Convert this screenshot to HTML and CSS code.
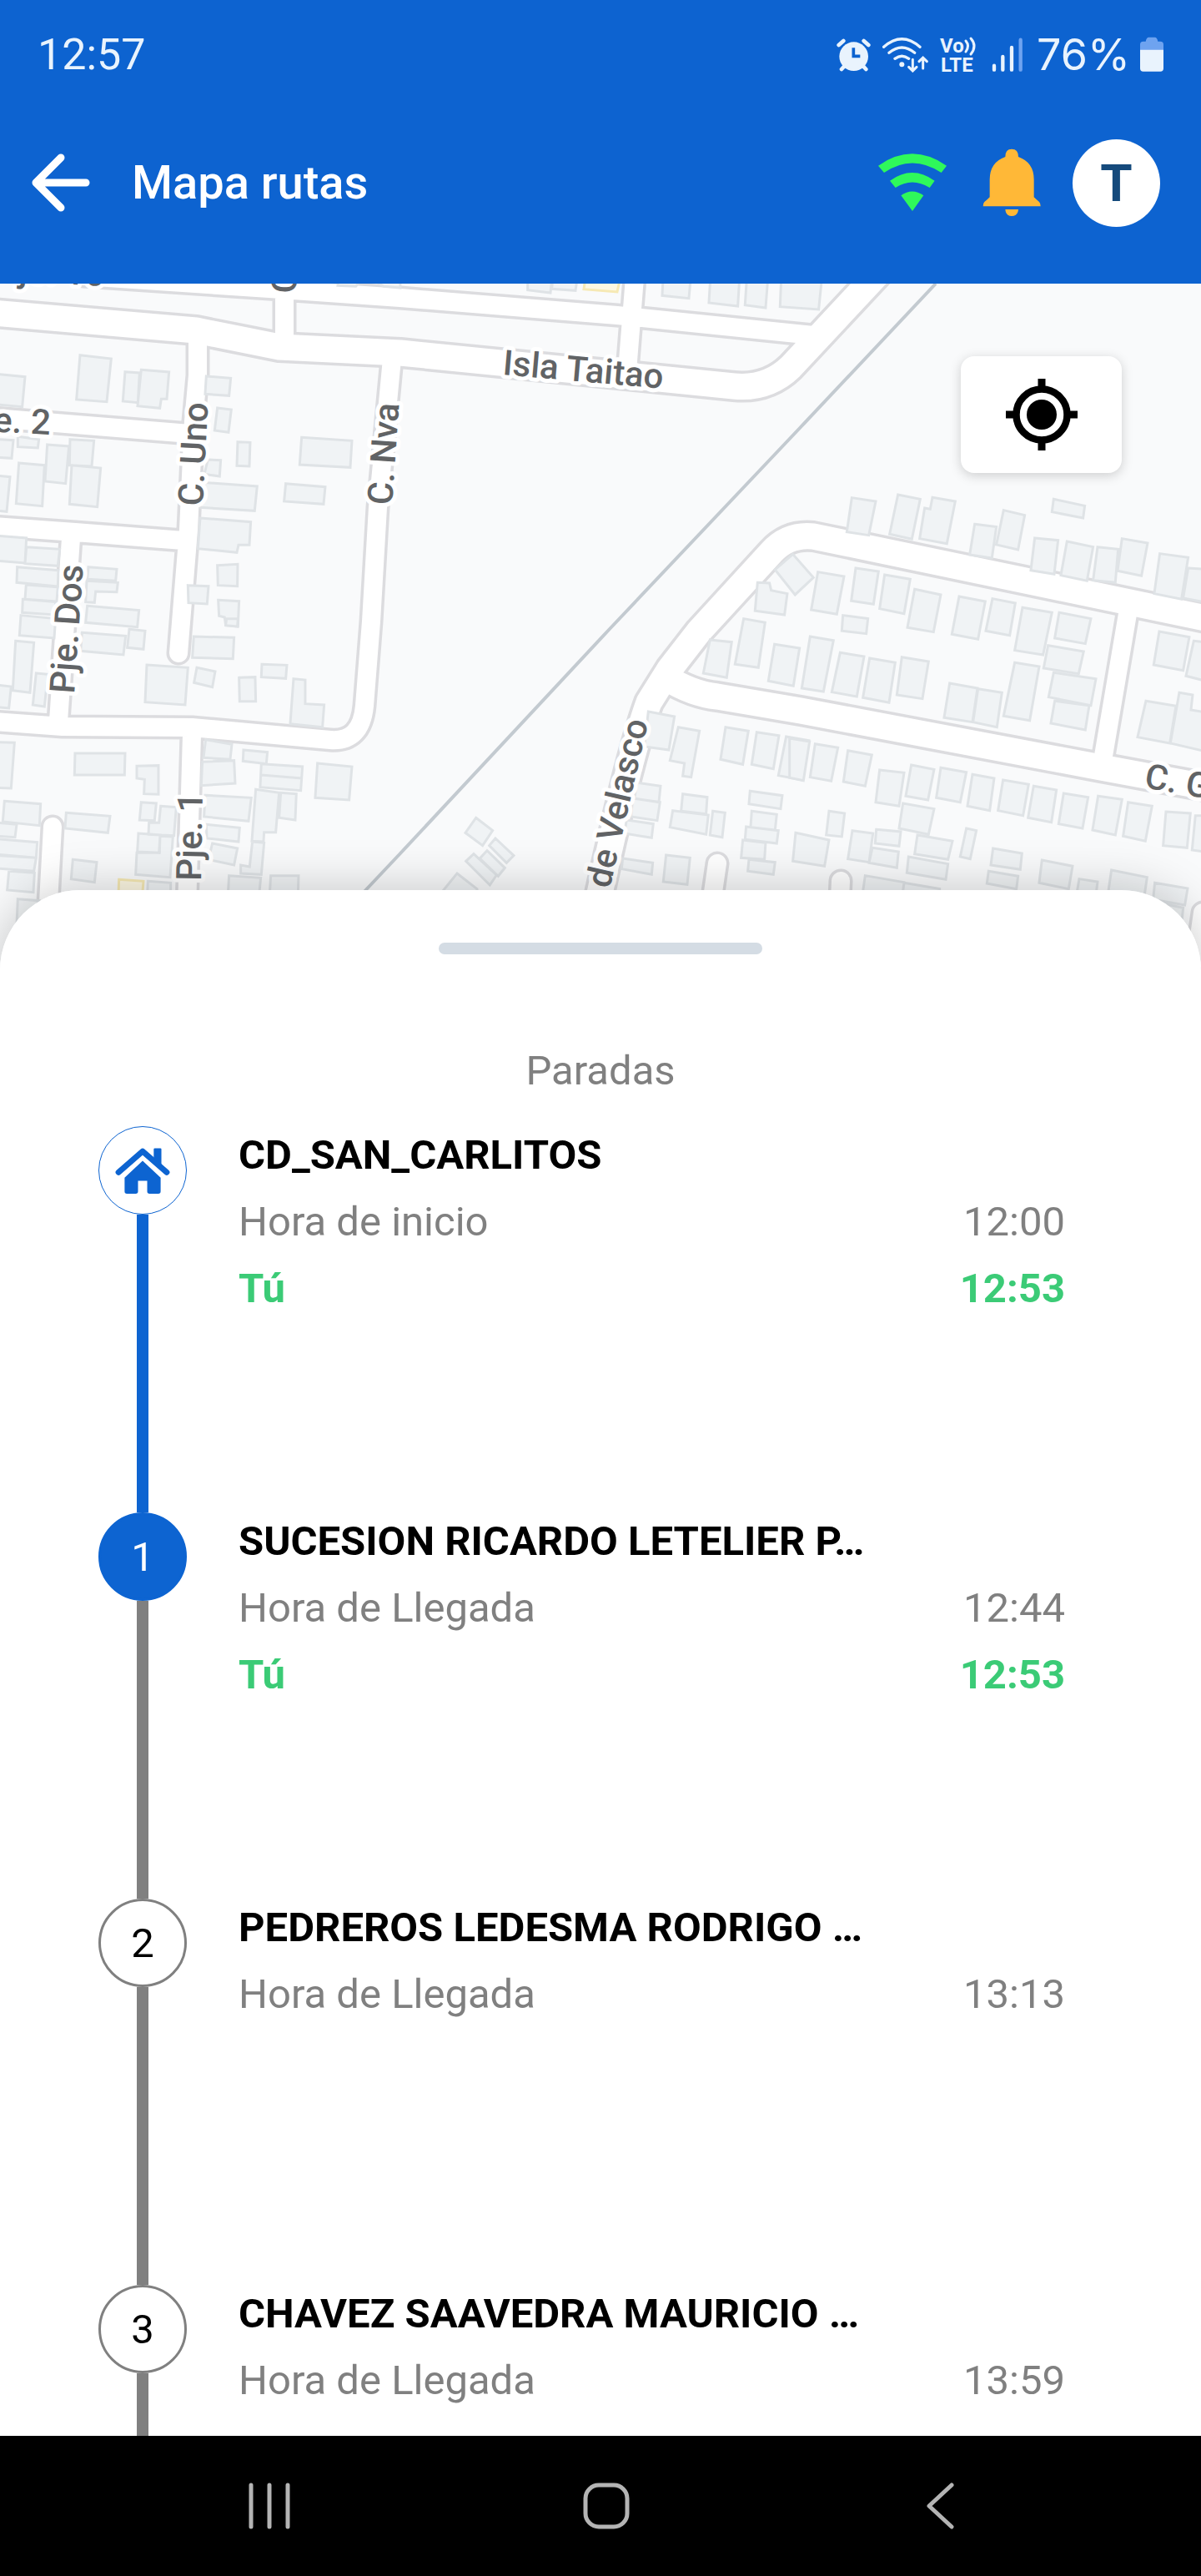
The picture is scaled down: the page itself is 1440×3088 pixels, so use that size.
FILE: index.html
```html
<!DOCTYPE html>
<html lang="es">
<head>
  <meta charset="UTF-8">
  <meta name="viewport" content="width=device-width, initial-scale=1.0">
  <title>Mapa rutas</title>
  <link rel="stylesheet" href="styles.css">
</head>
<body>
  <header class="top">
    <div class="status-bar">
      <span class="clock">12:57</span>
      <div class="status-icons">
        <!-- alarma -->
        <svg width="43" height="43" viewBox="132 128 129 129">
          <g fill="none" stroke="#e9f3fd" stroke-width="14" stroke-linecap="round">
            <path d="M143 158L160 143M250 158L233 143M153 245L165 232M241 245L229 232"/>
          </g>
          <circle cx="197" cy="199" r="52" fill="#e9f3fd"/>
          <path d="M196 168V198H220" fill="none" stroke="#0d63d0" stroke-width="11"/>
        </svg>
        <!-- wifi del sistema -->
        <svg width="58" height="43" viewBox="311 128 174 129">
          <g fill="none" stroke="#e9f3fd" stroke-width="10" stroke-linecap="round">
            <path d="M319 165Q384 108 449 165M338 186Q384 148 430 186M359 207Q384 188 409 207"/>
            <path d="M423 210V250M409 237L423 251L437 237M460 242V204M446 217L460 203L474 217" stroke-width="9"/>
          </g>
          <circle cx="384" cy="228" r="9" fill="#e9f3fd"/>
        </svg>
        <svg class="volte" width="44" height="43" viewBox="0 0 44 43">
          <text x="0" y="19">Vo</text>
          <text x="1" y="42">LTE</text>
          <path d="M31 5Q36 11 31 18M37 2Q45 11 37 21" fill="none" stroke="#e9f3fd" stroke-width="3" stroke-linecap="round"/>
        </svg>
        <svg width="48" height="43" viewBox="673 129 144 129">
          <g fill="none" stroke="#e9f3fd" stroke-width="13" stroke-linecap="round">
            <path d="M700 233V248M731 201V248M763 168V248"/>
            <path d="M795 140V248" stroke="#6ea3f0"/>
          </g>
        </svg>
        <span class="battery-text">76%</span>
        <svg width="28" height="43" viewBox="1221 130 84 129">
          <path d="M1221 178V158Q1221 147 1232 147H1241Q1244 132 1252 132H1274Q1282 132 1285 147H1294Q1305 147 1305 158V178Z" fill="#6ea3f0"/>
          <path d="M1221 177H1305V244Q1305 255 1294 255H1232Q1221 255 1221 244Z" fill="#e9f3fd"/>
        </svg>
      </div>
    </div>

    <div class="app-bar">
      <button type="button" class="icon-btn" aria-label="Volver">
        <svg width="70" height="70" viewBox="0 0 70 70">
          <path d="M35 5L5 35L35 65M6 35H65" fill="none" stroke="#fff" stroke-width="9" stroke-linecap="round" stroke-linejoin="round"/>
        </svg>
      </button>
      <h1>Mapa rutas</h1>
      <svg class="wifi" width="82" height="70" viewBox="278 556 246 210">
        <g fill="#2ff85b">
          <path d="M278 600Q400 514 524 600L505 625Q400 556 299 625Z"/>
          <path d="M320 654Q400 596 481 654L463 679Q400 640 340 679Z"/>
          <path d="M360 707Q400 678 441 707L401 763Z"/>
        </g>
      </svg>
      <button type="button" class="icon-btn bell" aria-label="Notificaciones">
        <svg width="70" height="82" viewBox="652 543 210 246">
          <path d="M734 573Q734 545 757 545Q781 545 781 573Q837 593 837 655V718Q846 727 856 735Q861 740 861 751H654Q654 740 659 735Q670 727 678 718V655Q678 593 734 573Z" fill="#ffb837"/>
          <path d="M734 762H781Q779 786 757 786Q736 786 734 762Z" fill="#ffb837"/>
        </svg>
      </button>
      <button type="button" class="avatar">T</button>
    </div>
  </header>

  <section class="map">
    <svg class="map-canvas" viewBox="0 340 1440 830" preserveAspectRatio="xMidYMin slice">
      <defs>
        <path id="wide" d="M-20 374L235 396L335 416L480 423L880 463Q920 467 948 440L1060 320
          M1460 744L975 643Q945 640 925 662L838 757L803 802L778 842Q755 905 716 1085
          M798 812Q830 832 860 835L960 852L1320 920L1460 946"/>
        <path id="narrow" d="M100 331L323 346L480 357L740 378L985 403M341 320V415M762 320L752 445
          M237 410V450L232 505L226 635L214 783M-20 500L228 520M-20 630L90 638L220 648M85 645L70 865
          M470 430L453 608L445 745L437 846Q433 890 396 887L230 872L75 871L-20 864
          M230 880L224 1090M63 991L57 1100M1322 912L1353 730
          M860 1035L852 1090M1008 1056L1006 1100M1442 1094L1434 1150"/>
      </defs>
      <use href="#wide" class="road-edge wide-edge"/>
      <use href="#narrow" class="road-edge narrow-edge"/>
      <use href="#wide" class="road wide-road"/>
      <use href="#narrow" class="road narrow-road"/>
      <path class="rail" d="M1122 340L960 512L730 755L480 1023L430 1076"/>

      <!-- edificios, por teselas -->
      <g class="buildings" transform="translate(0 335) scale(.3333)">
        <path d="M-10 340L90 350L80 458L-10 450ZM288 272L400 285L384 440L275 432ZM450 332L502 336L496 443L442 438ZM508 325L608 333L600 430L580 430L575 463L495 455Z"/>
        <path d="M742 348L830 355L824 418L738 412ZM782 462L832 468L822 550L772 543ZM855 584L900 586L897 672L852 670ZM748 648L794 650L790 708L735 700ZM728 730L925 744L916 832L720 820ZM720 858L902 872L897 955L858 955L852 982L712 968Z"/>
        <path d="M1085 568L1266 580L1260 676L1078 666ZM1028 734L1170 746L1164 808L1022 798ZM782 1028L855 1024L854 1103L784 1100ZM676 1100L750 1103L745 1167L678 1163ZM785 1153L860 1157L856 1248L812 1244L808 1215L788 1210Z"/>
        <path d="M-10 575L48 578L42 643L-10 640ZM64 565L140 575L136 606L64 602ZM170 594L248 600L236 734L162 726ZM252 575L338 580L330 672L250 668ZM68 660L160 668L152 815L58 806ZM258 668L362 678L350 818L250 808ZM-10 706L36 710L24 835L-10 832Z"/>
        <path d="M-10 922L95 930L90 1020L-10 1012ZM95 962L215 970L208 1030L90 1022ZM62 1034L210 1046L208 1104L60 1090ZM94 1098L208 1106L204 1158L90 1150ZM82 1150L200 1160L196 1206L80 1198ZM75 1208L200 1220L195 1290L70 1280Z"/>
        <path d="M318 1034L420 1042L416 1084L314 1078ZM312 1084L424 1090L420 1124L344 1122L340 1162L308 1160ZM314 1174L500 1190L494 1250L308 1234Z"/>
        <path d="M1218 0L1300 0L1280 25L1215 22ZM1340 0H1440V30L1380 25Z"/>
      </g>
      <g class="buildings" transform="translate(480 335) scale(.3333)">
        <path d="M458 0H545L540 48L458 38ZM548 0H636L630 40L545 34ZM945 0H1044L1038 68L942 58ZM1115 0H1220L1214 96L1110 84ZM1246 0H1322L1314 102L1240 92ZM1370 0H1516L1505 108L1366 98Z"/>
        <path class="yellow" d="M665 0H790L780 45L660 35Z"/>
        <path d="M1285 1090L1328 1092L1334 1118L1392 1130L1382 1206L1276 1192ZM1348 1044L1412 988L1486 1072L1420 1134ZM1235 1220L1312 1234L1288 1396L1204 1384Z"/>
      </g>
      <g class="buildings" transform="translate(960 335) scale(.3333)">
        <path d="M184 785L270 798L245 920L166 908ZM350 774L430 790L400 934L320 916ZM474 784L556 798L526 950L428 932L446 822L466 826ZM626 880L704 890L688 1002L608 990ZM730 830L806 848L782 972L704 954ZM910 790L1022 814L1016 858L904 836Z"/>
        <path d="M842 930L926 938L912 1060L828 1046ZM958 942L1052 962L1030 1084L936 1064ZM1068 962L1142 970L1132 1090L1052 1082ZM1156 932L1248 948L1226 1066L1140 1048ZM1292 986L1394 1000L1370 1150L1272 1130ZM1394 1038L1450 1042V1160L1376 1146Z"/>
        <path d="M62 1052L156 1068L130 1204L38 1188ZM198 1038L280 1050L262 1168L182 1156ZM302 1062L394 1078L372 1202L284 1184ZM410 1114L504 1134L478 1268L384 1252ZM570 1140L664 1158L638 1294L544 1276ZM690 1148L772 1164L752 1280L666 1264ZM798 1180L904 1198L872 1350L770 1334ZM930 1198L1044 1220L1024 1310L914 1290ZM152 1208L242 1220L236 1274L148 1264Z"/>
      </g>
      <g class="buildings" transform="translate(0 745) scale(.3333)">
        <path d="M56 70L122 76L108 256L46 248ZM130 186L172 190L160 306L118 300ZM-10 228L40 234L32 312L-10 308ZM295 40L452 52L444 120L290 106ZM465 28L522 34L516 100L458 94ZM697 54L842 58L838 134L692 130ZM528 156L676 166L666 300L522 290ZM708 166L774 180L764 236L698 220ZM815 -10H856L854 18L812 14Z"/>
        <path d="M942 154L1032 157L1028 205L940 200ZM860 202L918 200L920 287L862 287ZM1056 206L1098 210L1098 296L1166 300L1160 380L1044 368ZM740 425L834 442L828 496L732 490ZM728 505L842 500L846 582L724 590ZM876 462L962 470L958 512L874 502ZM940 512L1088 522L1082 608L936 596ZM940 552L1086 564ZM1142 510L1266 522L1256 642L1134 634Z"/>
        <path d="M738 625L904 634L894 718L734 702ZM920 604L1004 616L992 758L950 758L948 792L906 790ZM1010 616L1066 620L1062 714L1004 706ZM742 730L862 742L858 792L744 780ZM764 798L854 816L842 876L750 856ZM908 792L950 796L940 910L866 906L866 876L898 882ZM824 914L938 922L932 985H820ZM974 914L1074 914L1072 985H970Z"/>
        <path d="M270 474L450 474L448 552L268 552ZM492 520L570 518L570 622L518 620L520 568L492 564ZM-10 434L52 436L40 600L-10 598ZM16 646L146 656L142 734L10 720ZM-10 724L60 730L54 776L-10 772ZM-10 782L134 794L130 850L-10 838ZM-10 842L130 850L122 898L-10 888ZM32 898L124 904L120 974L26 966ZM238 688L396 700L388 760L234 744ZM262 856L348 866L340 938L256 926ZM64 998L140 1004L110 1060L60 1090Z"/>
        <path d="M508 650L562 654L556 716L502 714ZM578 664L634 668L626 770L534 766L536 724L572 724ZM498 762L576 768L572 832L494 828ZM576 772L622 774L612 920L488 910L492 832H574ZM532 934L614 940V985H530Z"/>
        <path class="yellow" d="M428 928L516 934L512 985H426Z"/>
      </g>
      <g class="buildings" transform="translate(480 745) scale(.3333)">
        <path d="M272 706L332 752L296 806L234 760ZM342 780L408 842L382 868L320 806ZM312 824L376 886L352 916L286 852ZM264 836L346 912L322 948L236 862ZM204 906L276 962V985H140Z"/>
        <path d="M1114 66L1192 74L1174 202L1090 186ZM1346 82L1436 96L1414 232L1324 214ZM892 324L986 342L966 462L878 450ZM1000 380L1076 394L1046 560L1016 556L1022 510L970 500ZM1170 380L1252 394L1232 514L1152 496ZM1282 398L1362 410L1342 530L1264 514ZM1388 414L1470 428L1446 570L1360 554Z"/>
        <path d="M852 580L936 592L930 650L842 636ZM836 636L934 650L924 716L830 702ZM814 714L910 728L904 778L806 762ZM800 852L908 868L904 910L796 890ZM956 840L1042 850L1032 946L946 936ZM1016 620L1104 632L1100 692L1010 682ZM980 680L1108 696L1100 766L970 740ZM1124 682L1168 688L1158 776L1114 768Z"/>
        <path d="M1258 610L1374 626L1368 674L1254 656ZM1264 682L1354 694L1348 750L1260 740ZM1244 738L1360 752L1354 798L1240 784ZM1232 786L1314 796L1310 856L1226 850ZM1254 856L1348 866L1342 910L1250 898ZM1422 760L1542 786L1526 880L1412 862Z"/>
      </g>
      <g class="buildings" transform="translate(960 745) scale(.3333)">
        <path d="M34 54L118 68L82 252L4 240ZM142 112L228 126L202 270L112 254ZM248 132L340 148L318 292L224 274ZM364 128L460 144L438 278L346 264ZM536 222L636 240L618 362L516 346ZM638 242L724 256L706 380L620 362ZM770 148L858 162L824 356L730 340ZM890 86L1018 108L1000 188L874 168ZM910 184L1062 206L1044 302L892 272ZM914 286L1038 302L1024 390L900 366Z"/>
        <path d="M1290 36L1398 56L1376 176L1270 156ZM1414 70L1450 74V212L1386 196ZM1242 286L1350 304L1328 438L1212 416ZM1362 256L1410 264L1404 318L1450 326V466L1330 438Z"/>
        <path d="M-40 420L32 432L10 572L-40 562ZM52 440L134 454L110 574L34 560ZM170 464L256 480L232 592L154 576ZM284 534L372 544L354 664L270 650ZM398 516L480 532L458 642L378 628ZM504 526L596 542L574 650L488 634ZM618 550L696 564L680 680L600 664ZM728 570L820 586L800 698L710 680ZM838 592L920 606L902 722L818 706ZM946 618L1034 632L1014 744L928 728ZM1070 628L1156 640L1132 768L1050 750ZM1178 650L1264 664L1240 790L1160 772ZM1314 684L1402 690L1390 814L1304 806ZM1420 698H1450V828L1408 822Z"/>
        <path d="M102 682L158 690L148 774L92 768ZM186 752L260 762L246 866L170 854ZM272 748L360 756L354 808L268 798ZM258 814L352 828L346 886L246 868ZM368 654L480 674L460 766L354 744ZM420 768L546 790L530 856L410 836ZM388 846L530 872L522 928L382 904ZM596 744L632 752L610 854L574 846ZM692 816L796 834L790 892L684 876ZM676 898L782 916L776 962L670 942ZM868 858L978 880L964 962L858 940ZM1002 926L1068 936L1062 985H992ZM1118 894L1246 920L1236 990H1104ZM1274 940L1392 960L1382 1020L1268 1000ZM232 914L372 938L366 985H222ZM372 940L500 962V985H366ZM1310 1016L1376 1030L1370 1090Z"/>
      </g>

      <g class="labels">
        <text transform="translate(602 449) rotate(5)">Isla Taitao</text>
        <text transform="translate(243 607) rotate(-87)">C. Uno</text>
        <text transform="translate(470 606) rotate(-86)">C. Nva</text>
        <text transform="translate(89 832) rotate(-86)">Pje. Dos</text>
        <text transform="translate(241 1056) rotate(-89)">Pje. 1</text>
        <text transform="translate(731 1066) rotate(-77)">de Velasco</text>
        <text transform="translate(60 521) rotate(3)" text-anchor="end">Pje. 2</text>
        <text transform="translate(1371 944) rotate(10)">C. G</text>
        <text transform="translate(125 343) rotate(3)" text-anchor="end">Pje. 10</text>
        <text transform="translate(355 352) rotate(-88)">C.</text>
      </g>
    </svg>
    <button type="button" class="locate" aria-label="Mi ubicación">
      <svg width="88" height="88" viewBox="-44 -44 88 88">
        <circle r="18"/>
        <circle r="30.5" fill="none" stroke="#000" stroke-width="8.5"/>
        <path d="M0-43V-31M0 31V43M-43 0H-31M31 0H43" stroke="#000" stroke-width="9"/>
      </svg>
    </button>
  </section>

  <main class="sheet">
    <div class="handle"></div>
    <h2>Paradas</h2>
    <ol class="stops">
      <li class="stop">
        <div class="track done">
          <span class="dot home">
            <svg width="68" height="57" viewBox="119 291 148 124">
              <path d="M130 357L193 302L256 357" fill="none" stroke="#0d64d1" stroke-width="15" stroke-linecap="round" stroke-linejoin="round"/>
              <path d="M222 297Q222 294 225 294H239Q242 294 242 297V340L222 322Z" fill="#0d64d1"/>
              <path d="M146 371L193 327L240 371V407Q240 413 234 413H211Q205 413 205 407V379H181V407Q181 413 175 413H152Q146 413 146 407Z" fill="#0d64d1"/>
            </svg>
          </span>
        </div>
        <div class="info">
          <h3>CD_SAN_CARLITOS</h3>
          <p><span>Hora de inicio</span><time>12:00</time></p>
          <p class="you"><span>Tú</span><time>12:53</time></p>
        </div>
      </li>
      <li class="stop">
        <div class="track">
          <span class="dot current">1</span>
        </div>
        <div class="info">
          <h3>SUCESION RICARDO LETELIER P…</h3>
          <p><span>Hora de Llegada</span><time>12:44</time></p>
          <p class="you"><span>Tú</span><time>12:53</time></p>
        </div>
      </li>
      <li class="stop">
        <div class="track">
          <span class="dot">2</span>
        </div>
        <div class="info">
          <h3>PEDREROS LEDESMA RODRIGO …</h3>
          <p><span>Hora de Llegada</span><time>13:13</time></p>
        </div>
      </li>
      <li class="stop">
        <div class="track">
          <span class="dot">3</span>
        </div>
        <div class="info">
          <h3>CHAVEZ SAAVEDRA MAURICIO …</h3>
          <p><span>Hora de Llegada</span><time>13:59</time></p>
        </div>
      </li>
    </ol>
  </main>

  <nav class="nav-bar">
    <button type="button" class="icon-btn" aria-label="Recientes">
      <svg width="50" height="56" viewBox="0 0 50 56">
        <path d="M3 3V53M25 3V53M47 3V53" stroke="#b4b4b4" stroke-width="5" stroke-linecap="round"/>
      </svg>
    </button>
    <button type="button" class="icon-btn" aria-label="Inicio">
      <svg width="56" height="56" viewBox="0 0 56 56">
        <rect x="3" y="3" width="50" height="50" rx="16" fill="none" stroke="#b4b4b4" stroke-width="5"/>
      </svg>
    </button>
    <button type="button" class="icon-btn" aria-label="Atrás">
      <svg width="46" height="56" viewBox="0 0 46 56">
        <path d="M36 3L9 28L36 53" fill="none" stroke="#b4b4b4" stroke-width="5" stroke-linecap="round" stroke-linejoin="round"/>
      </svg>
    </button>
  </nav>
</body>
</html>
```
FILE: styles.css
```css
* {
  box-sizing: border-box;
}
body {
  margin: 0;
  height: 100vh;
  display: flex;
  flex-direction: column;
  font-family: Roboto, "Liberation Sans", sans-serif;
  font-size: 49px;
  color: #000;
  background-color: #fff;
}
svg {
  display: block;
}
button {
  border: none;
  padding: 0;
  font-family: inherit;
  cursor: pointer;
}
h1, h2, h3, p {
  margin: 0;
}
.icon-btn {
  background: none;
}

/* cabecera */
.top {
  flex: none;
  background-color: #0d63d0;
  color: #fff;
}
.status-bar {
  display: flex;
  justify-content: space-between;
  align-items: center;
  height: 130px;
  padding: 0 45px;
  color: #e9f3fd;
  font-size: 52px;
}
.status-icons {
  display: flex;
  align-items: center;
  gap: 12px;
}
.battery-text {
  font-family: Inter, Roboto, sans-serif;
}
.volte {
  overflow: visible;
  font-size: 24px;
  font-weight: 700;
  fill: #e9f3fd;
}
.app-bar {
  display: flex;
  align-items: center;
  height: 210px;
  padding: 0 49px 32px 38px;
}
.app-bar h1 {
  flex: 1;
  margin-left: 50px;
  font-size: 56px;
  font-weight: 500;
}
.bell {
  margin: 0 38px 0 43px;
}
.avatar {
  width: 105px;
  height: 105px;
  border-radius: 50%;
  background-color: #fff;
  color: #154a7c;
  font-size: 62px;
  font-weight: 700;
}

/* mapa */
.map {
  flex: none;
  position: relative;
  height: 830px;
  overflow: hidden;
  background-color: #f9fafb;
}
.map-canvas {
  width: 100%;
  height: 100%;
}
.road-edge, .road {
  fill: none;
  stroke-linecap: round;
  stroke-linejoin: round;
}
.road-edge {
  stroke: #dcdcdf;
}
.road {
  stroke: #fff;
}
.wide-edge {
  stroke-width: 38px;
}
.wide-road {
  stroke-width: 31px;
}
.narrow-edge {
  stroke-width: 29px;
}
.narrow-road {
  stroke-width: 22px;
}
.rail {
  fill: none;
  stroke: #c3cad0;
  stroke-width: 4px;
}
.buildings {
  fill: #f0f3f5;
  stroke: #dfe3e6;
  stroke-width: 9px;
}
.buildings .yellow {
  fill: #fdf8e3;
  stroke: #f6e9b4;
}
.labels {
  font-size: 42px;
  font-weight: 500;
  fill: #616365;
  stroke: #fff;
  stroke-width: 10px;
  stroke-linejoin: round;
  paint-order: stroke;
}
.locate {
  position: absolute;
  top: 87px;
  right: 95px;
  width: 193px;
  height: 140px;
  display: flex;
  align-items: center;
  justify-content: center;
  border-radius: 16px;
  background-color: #fff;
  box-shadow: 0 3px 14px rgba(0,0,0,0.18);
}

/* panel de paradas */
.sheet {
  flex: 1;
  position: relative;
  min-height: 0;
  margin-top: -103px;
  padding-top: 63px;
  overflow-y: auto;
  scrollbar-width: none;
  border-radius: 96px 96px 0 0;
  background-color: #fff;
  box-shadow: 0 0 60px rgba(0,0,0,0.22);
}
.handle {
  width: 388px;
  height: 14px;
  margin: 0 auto;
  border-radius: 7px;
  background-color: #d4dce4;
}
.sheet h2 {
  margin-top: 110px;
  font-size: 49px;
  font-weight: 400;
  line-height: 60px;
  text-align: center;
  color: #808080;
}
.stops {
  list-style: none;
  margin: 36px 0 0;
  padding: 0 163px 0 118px;
}
.stop {
  display: flex;
  gap: 62px;
  height: 463px;
}
.track {
  display: flex;
  flex-direction: column;
  align-items: center;
}
.track::after {
  content: "";
  flex: 1;
  width: 14px;
  background-color: #808080;
}
.track.done::after {
  background-color: #0d64d1;
}
.dot {
  display: flex;
  align-items: center;
  justify-content: center;
  width: 106px;
  height: 106px;
  border: 3px solid #808080;
  border-radius: 50%;
  background-color: #fff;
}
.dot.home {
  border: 1px solid #0d64d1;
}
.dot.current {
  border-color: #0d64d1;
  background-color: #0d64d1;
  color: #fff;
}
.info {
  flex: 1;
}
.info h3 {
  margin-bottom: 5px;
  font-size: 49px;
  font-weight: 700;
  line-height: 70px;
}
.info p {
  display: flex;
  justify-content: space-between;
  line-height: 80px;
  color: #808080;
}
.info .you {
  color: #3bcb76;
  font-weight: 700;
}

/* barra del sistema */
.nav-bar {
  flex: none;
  position: relative;
  display: flex;
  justify-content: space-between;
  align-items: center;
  height: 168px;
  padding: 0 289px 0 298px;
  background-color: #000;
}
```
